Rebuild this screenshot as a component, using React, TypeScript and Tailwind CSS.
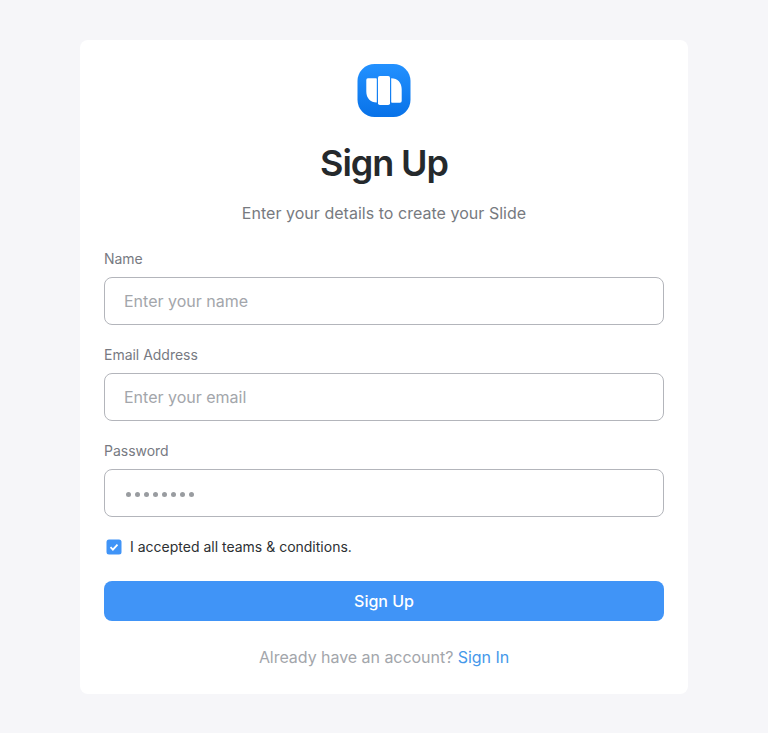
import React from 'react';

function Logo() {
  return (
    <svg width="54" height="54" viewBox="0 0 54 54" className="block">
      <defs>
        <linearGradient id="logo" x1="0" y1="0" x2="0" y2="1">
          <stop offset="0" stopColor="#2391ff" />
          <stop offset="1" stopColor="#0872e8" />
        </linearGradient>
      </defs>
      <rect x="0.5" y="0" width="53" height="53" rx="17" fill="url(#logo)" />
      <path d="M10.800 14.300h8.200a0.800 0.800 0 0 1 0.800 0.800v23.500c-6.500 0-10.500-4.500-10.500-11v-11.600a1.700 1.700 0 0 1 1.500-1.700z" fill="#fff" />
      <rect x="21" y="12" width="12" height="29" rx="1.800" fill="#fff" />
      <path d="M34.200 14.300c6.500 0 10.500 4.500 10.500 11v11.800a1.700 1.700 0 0 1-1.700 1.700h-8a0.800 0.800 0 0 1-0.800-0.800z" fill="#fff" />
    </svg>
  );
}

type FieldProps = { label: string; type: string; placeholder?: string };

function Field({ label, type, placeholder }: FieldProps) {
  return (
    <label className="mb-5 block">
      <span className="block h-5 text-[14px] leading-5 tracking-[-0.02px] text-[#777a82]">{label}</span>
      <span className="mt-2 flex h-12 items-center rounded-lg border border-[#b3b5bb] px-[19px]">
        {type === 'password' ? (
          <span className="mt-[3px] ml-[2px] flex gap-1" aria-label="Password">
            {Array.from({ length: 8 }, (_, i) => (
              <i key={i} className="size-[5px] rounded-full bg-[#999ca0]" />
            ))}
          </span>
        ) : (
          <input type={type} placeholder={placeholder} className="w-full text-[16px] outline-none placeholder:text-[#a3a6ab]" />
        )}
      </span>
    </label>
  );
}

export default function App() {
  return (
    <main className="h-[733px] bg-[#f6f6f9] px-20 pt-10 font-['Inter',sans-serif]">
      <section className="h-[654px] rounded-lg bg-white px-6 pt-6">
        <header className="flex flex-col items-center">
          <Logo />
          <h1 className="mt-[21px] text-[36px] leading-[48px] font-semibold tracking-[-1.080px] text-[#25292c]">Sign Up</h1>
          <p className="mt-[14px] text-[16px] leading-6 tracking-[0.03px] text-[#777a80]">Enter your details to create your Slide</p>
        </header>
        <form className="mt-6">
          <Field label="Name" type="text" placeholder="Enter your name" />
          <Field label="Email Address" type="email" placeholder="Enter your email" />
          <Field label="Password" type="password" />
          <div className="flex h-5 items-center gap-2 pl-[2px] text-[14px] text-[#2d3033]">
            <svg width="16" height="16" viewBox="0 0 16 16">
              <rect x="0.500" y="0.500" width="15" height="15" rx="2.500" fill="#4094f7" />
              <path d="m4.500 8.200 2.400 2.400 4.600-5" fill="none" stroke="#fff" strokeWidth="1.800" />
            </svg>
            <span className="h-5 leading-[19px]">I accepted all teams &amp; conditions.</span>
          </div>
          <button type="button" className="mt-6 h-10 w-full rounded-lg bg-[#4094f7] text-[16px] font-medium text-white">Sign Up</button>
        </form>
        <p className="mt-6 text-center text-[16px] leading-6 tracking-[-0.04px] text-[#a3a6ab]">
          Already have an account? <a className="text-[#4598ea]">Sign In</a>
        </p>
      </section>
    </main>
  );
}
